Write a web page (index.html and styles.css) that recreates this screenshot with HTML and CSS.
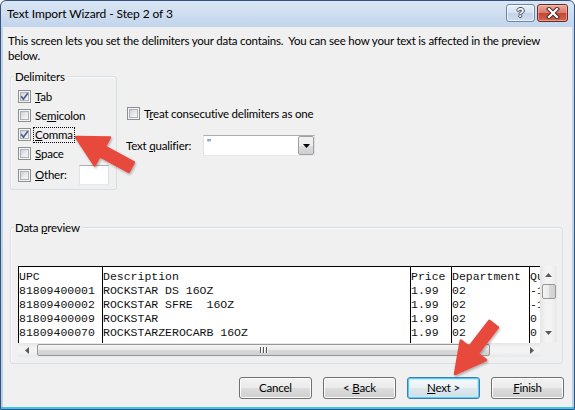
FILE: index.html
```html
<!DOCTYPE html>
<html>
<head>
<meta charset="utf-8">
<title>Text Import Wizard - Step 2 of 3</title>
<link rel="stylesheet" href="styles.css">
</head>
<body>
<div class="window">
  <div class="titlebar">
    <span class="title">Text Import Wizard - Step 2 of 3</span>
    <div class="caption-btns">
      <div class="cbtn help"><span class="help-glyph">?</span></div>
      <div class="cbtn close">
        <svg width="14" height="12" viewBox="0 0 14 12">
          <path d="M3 2 L11 10 M11 2 L3 10" stroke="#4a2a26" stroke-width="4.2" stroke-linecap="square"/>
          <path d="M3 2 L11 10 M11 2 L3 10" stroke="#ffffff" stroke-width="2.2" stroke-linecap="square"/>
        </svg>
      </div>
    </div>
  </div>
  <div class="client">
    <p class="intro">This screen lets you set the delimiters your data contains.&nbsp; You can see how your text is affected in the preview<br>below.</p>

    <div class="options">
      <div class="group delims">
        <span class="legend">Delimiters</span>
        <div class="chk-row">
          <span class="cb checked"><span class="cb-in"></span><svg class="tick" width="13" height="13" viewBox="0 0 13 13"><path d="M3.2 6.3 L5.4 9.2 L9.8 3.2" fill="none" stroke="#4b5c92" stroke-width="1.7"/></svg></span>
          <span class="lbl"><u>T</u>ab</span>
        </div>
        <div class="chk-row">
          <span class="cb"><span class="cb-in"></span></span>
          <span class="lbl">Se<u>m</u>icolon</span>
        </div>
        <div class="chk-row">
          <span class="cb checked"><span class="cb-in"></span><svg class="tick" width="13" height="13" viewBox="0 0 13 13"><path d="M3.2 6.3 L5.4 9.2 L9.8 3.2" fill="none" stroke="#4b5c92" stroke-width="1.7"/></svg></span>
          <span class="lbl focus"><u>C</u>omma</span>
        </div>
        <div class="chk-row">
          <span class="cb"><span class="cb-in"></span></span>
          <span class="lbl"><u>S</u>pace</span>
        </div>
        <div class="chk-row other">
          <span class="cb"><span class="cb-in"></span></span>
          <span class="lbl"><u>O</u>ther:</span>
          <span class="textbox"></span>
        </div>
      </div>

      <div class="right-col">
        <div class="chk-row treat">
          <span class="cb"><span class="cb-in"></span></span>
          <span class="lbl">T<u>r</u>eat consecutive delimiters as one</span>
        </div>
        <div class="qual-row">
          <span class="qual-label">Text <u>q</u>ualifier:</span>
          <div class="combo">
            <span class="combo-val">"</span>
            <span class="combo-btn"><svg width="7" height="4" viewBox="0 0 7 4"><path d="M0 0 H7 L3.5 4 Z" fill="#000"/></svg></span>
          </div>
        </div>
      </div>
    </div>

    <div class="group preview-group">
      <span class="legend">Data <u>p</u>review</span>
      <div class="preview">
        <div class="preview-main">
          <div class="grid">
            <div class="col c1">UPC
81809400001
81809400002
81809400009
81809400070</div>
            <div class="col c2">Description
ROCKSTAR DS 16OZ
ROCKSTAR SFRE  16OZ
ROCKSTAR
ROCKSTARZEROCARB 16OZ</div>
            <div class="col c3">Price
1.99
1.99
1.99
1.99</div>
            <div class="col c4">Department
02
02
02
02</div>
            <div class="col c5">Quantity
-1
-1
0
0</div>
          </div>
          <div class="vscroll">
            <div class="sb-btn up"><svg width="7" height="4" viewBox="0 0 7 4"><path d="M0 4 H7 L3.5 0 Z" fill="#5a5a5a"/></svg></div>
            <div class="vthumb"></div>
            <div class="sb-fill"></div>
            <div class="sb-btn down"><svg width="7" height="4" viewBox="0 0 7 4"><path d="M0 0 H7 L3.5 4 Z" fill="#5a5a5a"/></svg></div>
          </div>
        </div>
        <div class="hscroll-row">
          <div class="hscroll">
            <div class="sb-btn left"><svg width="4" height="7" viewBox="0 0 4 7"><path d="M4 0 V7 L0 3.5 Z" fill="#5a5a5a"/></svg></div>
            <div class="hthumb"><span class="grip"></span><span class="grip"></span><span class="grip"></span></div>
            <div class="sb-fill"></div>
            <div class="sb-btn right"><svg width="4" height="7" viewBox="0 0 4 7"><path d="M0 0 V7 L4 3.5 Z" fill="#5a5a5a"/></svg></div>
          </div>
          <div class="corner"></div>
        </div>
      </div>
    </div>

    <div class="buttons">
      <div class="btn"><span>Cancel</span></div>
      <div class="btn"><span>&lt; <u>B</u>ack</span></div>
      <div class="btn default"><span><u>N</u>ext &gt;</span></div>
      <div class="btn"><span><u>F</u>inish</span></div>
    </div>
  </div>

  <svg class="arrows" width="575" height="410" viewBox="0 0 575 410">
    <defs>
      <filter id="sh" x="-20%" y="-20%" width="140%" height="140%">
        <feDropShadow dx="1" dy="1.5" stdDeviation="1.2" flood-color="#000" flood-opacity="0.3"/>
      </filter>
    </defs>
    <polygon filter="url(#sh)" fill="#e8493d" stroke="#e8493d" stroke-width="2.5" stroke-linejoin="round"
      points="76,137 110,137.4 104.9,146.6 133.9,162.4 128.7,172 99.7,156.2 94.6,165.4"/>
    <polygon filter="url(#sh)" fill="#e8493d" stroke="#e8493d" stroke-width="2.5" stroke-linejoin="round"
      points="455,374 486,360.1 477.7,353.7 497.9,327.6 489.3,320.8 469.1,346.9 460.8,340.5"/>
  </svg>
</div>
</body>
</html>
```

FILE: styles.css
```css
* { box-sizing: border-box; }
html, body { margin: 0; padding: 0; }
body {
  width: 575px;
  height: 410px;
  overflow: hidden;
  background: #ffffff;
  font-family: Lato, "Liberation Sans", sans-serif;
  font-size: 11.5px;
  letter-spacing: -0.2px;
  color: #000;
}

.window {
  position: relative;
  width: 575px;
  height: 410px;
  border: 1px solid #34547e;
  border-radius: 6px 6px 0 0;
  background:
    linear-gradient(#3cc4ef, #3cc4ef) left bottom / 100% 2px no-repeat,
    linear-gradient(#dae6f4, #c2d5ec 26px, #b8cfea 100%);
  display: flex;
  flex-direction: column;
  overflow: hidden;
}

/* title bar */
.titlebar {
  height: 26px;
  flex: none;
  display: flex;
  align-items: center;
  padding-left: 6px;
}
.title { line-height: 16px; color: #000; font-size: 12px; letter-spacing: -0.1px; }
.caption-btns {
  margin-left: auto;
  margin-right: 6px;
  align-self: flex-start;
  margin-top: 3px;
  display: flex;
  gap: 2px;
}
.cbtn {
  height: 18px;
  border-radius: 3px;
  display: flex;
  align-items: center;
  justify-content: center;
}
.help {
  width: 29px;
  border: 1px solid #6f84a6;
  background: linear-gradient(#e9f0f9, #d5e2f2 50%, #c3d4ea 50%, #cfdcee);
  box-shadow: inset 0 0 0 1px rgba(255,255,255,0.6);
}
.help-glyph {
  font-family: "Liberation Sans", sans-serif;
  font-weight: bold;
  font-size: 13px;
  line-height: 14px;
  letter-spacing: 0;
  color: #fff;
  text-shadow: 1px 0 0 #3d4a60, -1px 0 0 #3d4a60, 0 1px 0 #3d4a60, 0 -1px 0 #3d4a60;
}
.close {
  width: 31px;
  border: 1px solid #6e2a22;
  background: linear-gradient(#e9a99c, #d77a6c 50%, #c4452f 50%, #cf6650);
  box-shadow: inset 0 0 0 1px rgba(255,210,200,0.5);
}

/* client area */
.client {
  flex: 1;
  margin: 0 2px 2px 2px;
  background: #f0f0f0;
  padding: 0 8px 0 7px;
}
.intro {
  margin: 6px 0 0 -2px;
  line-height: 15px;
  white-space: nowrap;
}

.group {
  border: 1px solid #d5dfe5;
  border-radius: 3px;
  box-shadow: inset 1px 1px 0 #fafafa;
}
.legend {
  display: table;
  background: #f0f0f0;
  line-height: 15px;
  padding: 0 2px 0 1px;
}

.options {
  margin-top: 13px;
  display: flex;
  align-items: flex-start;
}
.delims {
  width: 107px;
  padding: 0 7px 4px 7px;
}
.delims .legend { margin: -8px 0 3px -4px; }

.chk-row {
  display: flex;
  align-items: center;
  height: 19px;
}
.chk-row.other { height: 20px; margin-top: 2px; }
.cb {
  position: relative;
  flex: none;
  width: 13px;
  height: 13px;
  border: 1px solid #8e8f8f;
  background: #f4f4f4;
  padding: 1px;
}
.cb-in {
  display: block;
  width: 9px;
  height: 9px;
  border: 1px solid #aeb2b8;
  background: linear-gradient(135deg, #cdd0d5 0%, #e9eaec 55%, #f7f7f7 100%);
}
.tick { position: absolute; left: -1px; top: -1px; }
.lbl {
  margin-left: 2px;
  padding: 0 1px;
  border: 1px solid transparent;
  line-height: 14px;
  white-space: nowrap;
}
.lbl.focus { border: 1px dotted #000; }
.textbox {
  margin-left: auto;
  width: 30px;
  height: 20px;
  background: #fff;
  border: 1px solid;
  border-color: #abadb3 #dbdfe6 #e3e9ef #e2e3ea;
}

.right-col {
  margin-left: 10px;
}
.chk-row.treat { height: 15px; margin-top: 30px; }
.qual-row {
  margin-top: 14px;
  display: flex;
  align-items: center;
  height: 21px;
}
.qual-label {
  width: 77px;
  margin-left: -1px;
  white-space: nowrap;
}
.combo {
  width: 112px;
  height: 21px;
  display: flex;
  background: #fff;
  border: 1px solid;
  border-color: #abadb3 #dbdfe6 #e3e9ef #e2e3ea;
}
.combo-val {
  flex: 1;
  padding-left: 3px;
  line-height: 14px;
  color: #2a4f8f;
  font-family: "Liberation Sans", sans-serif;
  font-size: 11px;
}
.combo-btn {
  width: 16px;
  border: 1px solid #a0a0a0;
  border-radius: 2px;
  background: linear-gradient(#f2f2f2, #ebebeb 50%, #dddddd 50%, #cfcfcf);
  display: flex;
  align-items: center;
  justify-content: center;
}

/* data preview */
.preview-group {
  margin-top: 37px;
  margin-right: 1px;
  padding: 0 5px 6px 7px;
}
.preview-group .legend { margin: -8px 0 31px -4px; }
.preview {
  width: 539px;
  height: 91px;
  display: flex;
  flex-direction: column;
}
.preview-main {
  display: flex;
  height: 77px;
}
.grid {
  display: flex;
  width: 522px;
  height: 77px;
  border-left: 1px solid #000;
  border-top: 1px solid #000;
  background: #fff;
  overflow: hidden;
  font-family: "Liberation Mono", monospace;
  font-size: 11.5px;
  letter-spacing: 0;
  line-height: 14px;
  color: #111;
}
.col {
  flex: none;
  white-space: pre;
  padding-top: 3px;
  overflow: hidden;
}
.col + .col { border-left: 1px solid #000; }
.c1 { width: 83px; }
.c2 { width: 308px; }
.c3 { width: 41px; }
.c4 { width: 78px; }
.c5 { flex: 1; }

.vscroll {
  width: 17px;
  display: flex;
  flex-direction: column;
  background: linear-gradient(90deg, #e6e6e6, #f3f3f3 35%, #f3f3f3 65%, #e8e8e8);
}
.sb-btn {
  flex: none;
  display: flex;
  align-items: center;
  justify-content: center;
}
.vscroll .sb-btn { height: 17px; }
.vscroll .sb-btn.down { padding-bottom: 4px; }
.vthumb {
  flex: none;
  height: 15px;
  width: 14px;
  margin: 1px 1px 0 2px;
  border: 1px solid #979797;
  border-radius: 2px;
  background: linear-gradient(90deg, #f4f4f4, #e9e9e9 50%, #d9d9d9 50%, #d1d1d1);
}
.sb-fill { flex: 1; }

.hscroll-row {
  display: flex;
  height: 14px;
}
.hscroll {
  width: 522px;
  display: flex;
  background: linear-gradient(#e6e6e6, #f3f3f3 35%, #f3f3f3 65%, #e8e8e8);
}
.hscroll .sb-btn { width: 17px; }
.hthumb {
  flex: none;
  width: 453px;
  height: 12px;
  margin: 1px 0 0 2px;
  border: 1px solid #979797;
  border-radius: 2px;
  background: linear-gradient(#f4f4f4, #e9e9e9 50%, #d9d9d9 50%, #d1d1d1);
  display: flex;
  justify-content: center;
  align-items: center;
  gap: 2px;
}
.grip {
  width: 1px;
  height: 6px;
  background: #555;
  box-shadow: 1px 0 0 #fff;
}
.corner {
  width: 17px;
  background: #f0f0f0;
}

/* buttons */
.buttons {
  margin-top: 13px;
  display: flex;
  justify-content: flex-end;
  gap: 11px;
}
.btn {
  width: 73px;
  height: 22px;
  border: 1px solid #707070;
  border-radius: 3px;
  background: linear-gradient(#f2f2f2, #ebebeb 50%, #dddddd 50%, #cfcfcf);
  box-shadow: inset 0 0 0 1px #fcfcfc;
  display: flex;
  align-items: center;
  justify-content: center;
  line-height: 14px;
  white-space: nowrap;
}
.btn.default {
  border-color: #3c7fb1;
  box-shadow: inset 0 0 0 1px #58c9f4, inset 0 0 0 2px #c8ecfb;
  background: linear-gradient(#f3f8fb, #ebf2f6 50%, #dde8ef 50%, #d1dde5);
}

/* annotation arrows */
.arrows {
  position: absolute;
  left: -1px;
  top: -1px;
  pointer-events: none;
}
```
